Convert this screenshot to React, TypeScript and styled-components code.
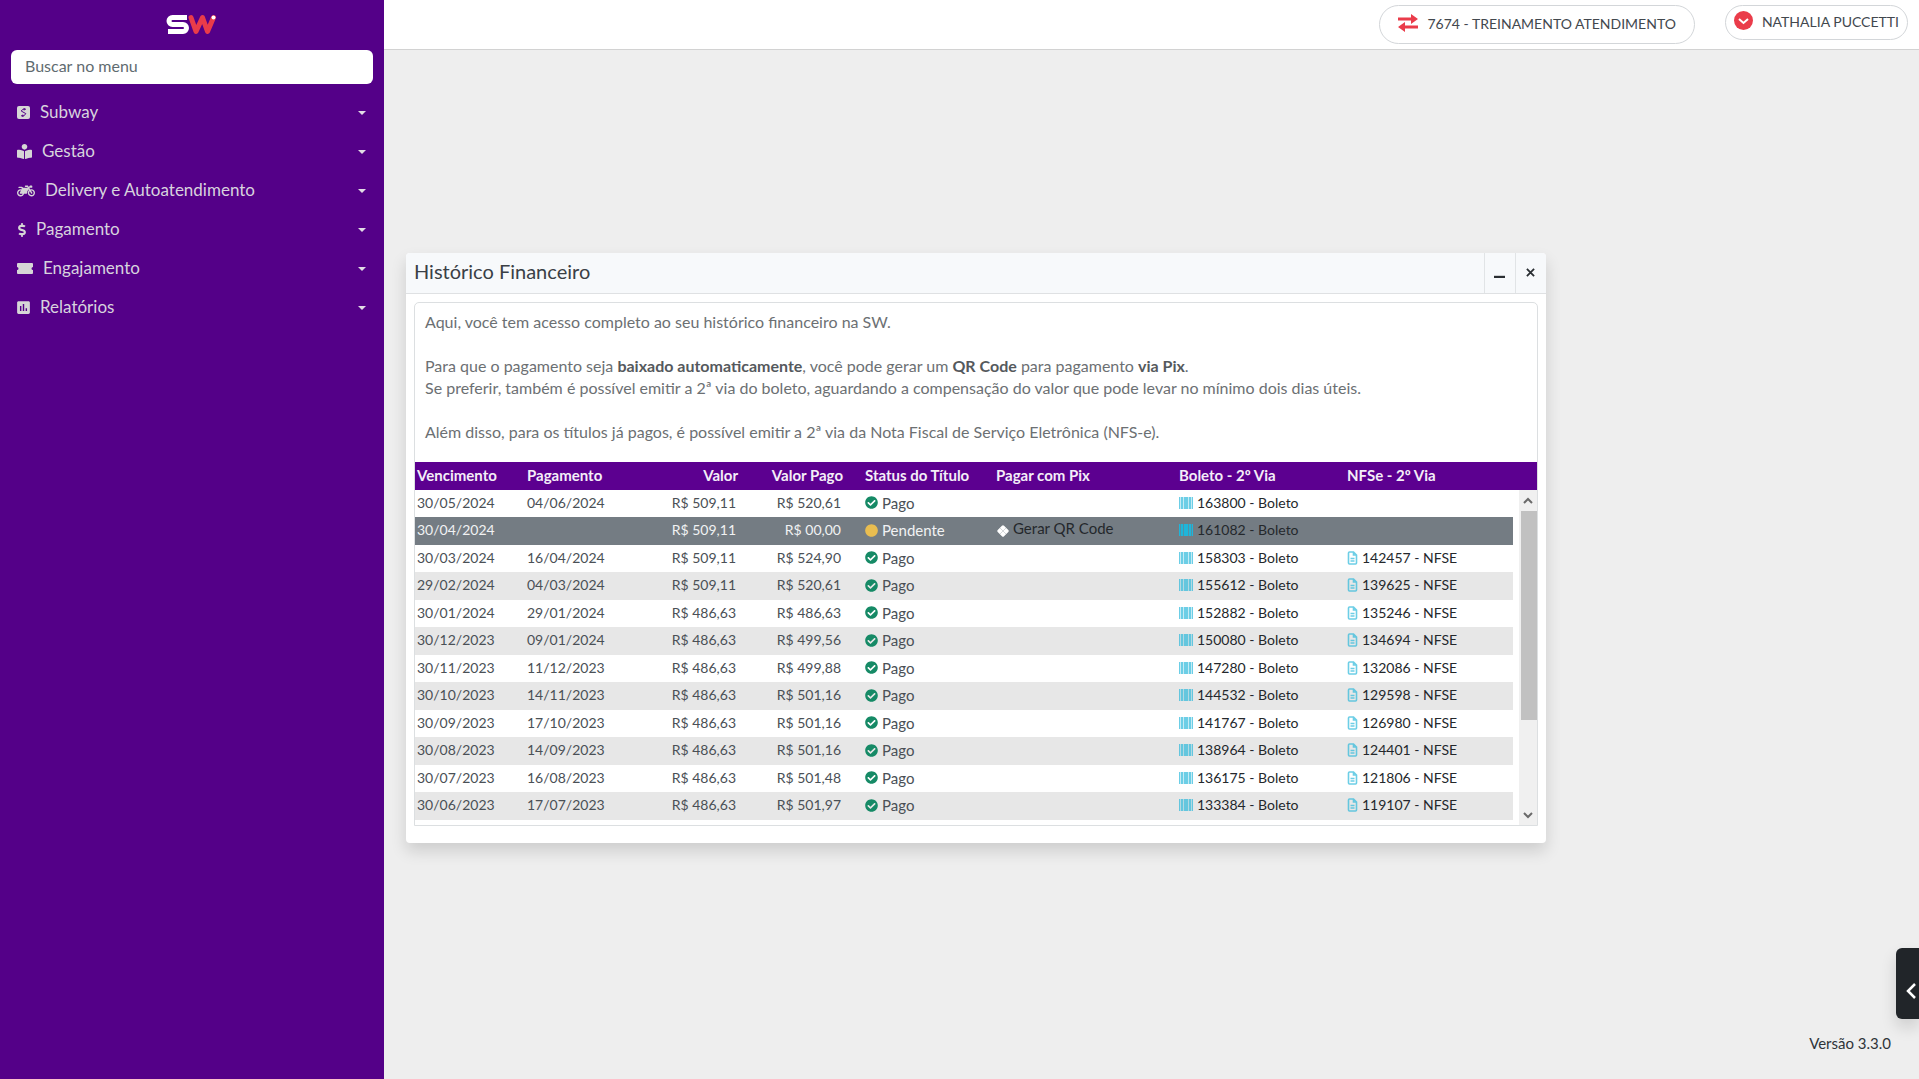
import React from "react";
import styled, { createGlobalStyle, css } from "styled-components";
import { FaMotorcycle, FaDollarSign, FaBookReader, FaCheckCircle, FaCircle } from "react-icons/fa";
import { MdInsertChart } from "react-icons/md";

const GlobalStyle = createGlobalStyle`
  *, *::before, *::after { box-sizing: border-box; }
  body { margin: 0; background: #eeeeee; color: #4a5056; font-family: Lato, "Open Sans", sans-serif; font-size: 16px; }
  button, input { font: inherit; color: inherit; }
  p { margin: 0; }
`;

const Page = styled.div`
  display: grid;
  grid-template-columns: 384px minmax(0, 1fr);
  min-height: 100vh;
`;

const Sidebar = styled.aside`
  display: flex;
  flex-direction: column;
  background: #540088;
  padding: 14px 11px 0;
`;

const Logo = styled.svg`
  display: block;
  align-self: center;
  width: 52px;
  height: 22px;
`;

const SearchInput = styled.input`
  width: 100%;
  height: 34px;
  margin-top: 14px;
  padding: 0 14px 4px;
  border: 0;
  border-radius: 6px;
  background: #fff;
  &::placeholder { color: #5f6b70; opacity: 1; }
`;

const Menu = styled.ul`
  list-style: none;
  margin: 8px 0 0;
  padding: 0;
`;

const MenuButton = styled.button`
  display: flex;
  align-items: center;
  gap: 10px;
  width: 100%;
  height: 39px;
  padding: 0 7px 0 6px;
  border: 0;
  background: none;
  color: #d8d3de;
  font-size: 17px;
  line-height: 22px;
  text-align: left;
  cursor: pointer;
`;

const MenuIcon = styled.span<{ $width: number }>`
  display: flex;
  align-items: center;
  justify-content: center;
  width: ${(p) => p.$width}px;
  padding-top: 2px;
  color: #d6d6d6;
  svg { flex: none; }
`;

const MenuLabel = styled.span`
  flex: 1;
`;

const Caret = styled.span`
  margin-top: 3px;
  border: 4px solid transparent;
  border-top-color: #e2dde6;
  border-bottom: 0;
`;

const Content = styled.div`
  display: flex;
  flex-direction: column;
  min-width: 0;
`;

const TopBar = styled.header`
  display: flex;
  justify-content: flex-end;
  align-items: flex-start;
  gap: 30px;
  height: 50px;
  padding: 5px 11px 0;
  background: #fff;
  border-bottom: 1px solid #d2d2d2;
`;

const Pill = styled.button<{ $tall?: boolean }>`
  display: flex;
  align-items: center;
  gap: 9px;
  height: ${(p) => (p.$tall ? 39 : 35)}px;
  padding: ${(p) => (p.$tall ? "0 18px 2px" : "0 8px 2px")};
  border: 1px solid #d3d6d9;
  border-radius: 20px;
  background: #fff;
  color: #42484e;
  font-size: 14px;
  line-height: 20px;
  cursor: pointer;
  svg { flex: none; margin-bottom: 2px; }
`;

const Desktop = styled.main`
  flex: 1;
  padding: 203px 0 40px 22px;
`;

const Window = styled.section`
  width: calc(100% - 373px);
  min-width: 1000px;
  background: #fff;
  border-radius: 4px;
  box-shadow: 0 8px 16px rgba(0, 0, 0, 0.14);
`;

const TitleBar = styled.div`
  display: flex;
  align-items: stretch;
  height: 41px;
  background: #f7f9fb;
  border-bottom: 1px solid #dfe1e3;
  border-radius: 4px 4px 0 0;
`;

const Title = styled.h1`
  flex: 1;
  margin: 0;
  padding-left: 8px;
  color: #3a4046;
  font-size: 20px;
  font-weight: 400;
  line-height: 36px;
`;

const WindowButton = styled.button`
  display: flex;
  align-items: center;
  justify-content: center;
  width: 31px;
  padding: 0 2px 2px 0;
  border: 0;
  border-left: 1px solid #e1e4e6;
  background: none;
  color: #2a2e32;
  cursor: pointer;
`;

const WindowBody = styled.div`
  padding: 8px 8px 17px;
`;

const Frame = styled.div`
  border: 1px solid #dcdfe1;
  border-radius: 5px 5px 0 0;
`;

const Intro = styled.div`
  padding: 8px 10px 19px;
  color: #6c7073;
  line-height: 22px;
  p + p { margin-top: 22px; }
  strong { color: #55595d; font-weight: 700; }
`;

const TableArea = styled.div`
  display: grid;
  grid-template-columns: minmax(0, 1fr) 18px;
  grid-template-rows: 28px auto;
`;

const Table = styled.table`
  display: block;
  grid-area: 1 / 1 / 3 / 3;
  margin-bottom: 5px;
  font-size: 14px;
  line-height: 20px;
`;

const Head = styled.thead`
  display: block;
  padding-right: 24px;
  background: #5c0090;
  color: #f4eef8;
`;

const Body = styled.tbody`
  display: block;
  margin-right: 24px;
`;

const rowGrid = css`
  display: grid;
  grid-template-columns: 92fr 92fr 105fr 87fr 113fr 165fr 150fr 168fr;
  column-gap: 18px;
  align-items: center;
`;

const HeadRow = styled.tr`
  ${rowGrid}
  height: 28px;
`;

const Row = styled.tr<{ $selected: boolean }>`
  ${rowGrid}
  height: 27px;
  &:nth-child(even) { height: 28px; background: #e7e7e7; }
  ${(p) => p.$selected && css`
    &&:nth-child(even) { background: #747c83; color: #f1f2f3; }
  `}
`;

const HeadCell = styled.th<{ $right?: boolean }>`
  padding: 0 2px 2px;
  font-size: 15px;
  font-weight: 700;
  text-align: ${(p) => (p.$right ? "right" : "left")};
  white-space: nowrap;
`;

const Cell = styled.td<{ $right?: boolean }>`
  padding: 0 ${(p) => (p.$right ? 4 : 2)}px 2px 2px;
  text-align: ${(p) => (p.$right ? "right" : "left")};
  white-space: nowrap;
`;

const Status = styled.span<{ $paid: boolean }>`
  display: flex;
  align-items: center;
  gap: 4px;
  font-size: 15px;
  svg { color: ${(p) => (p.$paid ? "#168a66" : "#e9bd50")}; }
`;

const DocLink = styled.a<{ $strong?: boolean }>`
  display: flex;
  align-items: center;
  gap: 4px;
  color: #24282c;
  text-decoration: none;
  svg { opacity: ${(p) => (p.$strong ? 1 : 0.65)}; }
`;

const PixLink = styled.a`
  display: flex;
  align-items: center;
  gap: 3px;
  color: #24282c;
  font-size: 15px;
  text-decoration: none;
  span { padding-bottom: 4px; }
  svg { margin-top: 2px; }
`;

const ScrollTrack = styled.div`
  grid-area: 2 / 2;
  display: flex;
  flex-direction: column;
  background: #f0f0f0;
`;

const ScrollButton = styled.button`
  display: flex;
  align-items: center;
  justify-content: center;
  height: 21px;
  padding: 0;
  border: 0;
  background: none;
  color: #6a6a6a;
`;

const ScrollThumb = styled.div`
  flex: 208;
  margin-left: 2px;
  background: #c1c1c1;
`;

const ScrollRest = styled.div`
  flex: 84;
`;

const SideTab = styled.button`
  position: fixed;
  right: 0;
  bottom: 60px;
  display: flex;
  align-items: center;
  justify-content: flex-end;
  width: 23px;
  height: 71px;
  padding: 14px 3px 0 0;
  border: 0;
  border-radius: 6px 0 0 6px;
  background: #212529;
  box-shadow: 0 8px 16px rgba(0, 0, 0, 0.14);
  color: #fff;
`;

const Version = styled.footer`
  padding: 0 28px 25px;
  color: #2f3439;
  font-size: 15px;
  line-height: 22px;
  text-align: right;
`;

const SubwayIcon = () => (
  <svg width="13" height="13" viewBox="0 0 13 13">
    <rect width="13" height="13" rx="2" fill="currentColor" />
    <path d="M9 3.2H6L4.2 5l4.6 2.6L7 9.800H4M7.2 2v2.4M5.8 8.6V11" fill="none" stroke="#540088" strokeWidth="1" />
  </svg>
);

const TicketIcon = () => (
  <svg width="16" height="11" viewBox="0 0 16 11">
    <path d="M1 0h14a1 1 0 0 1 1 1v3a1.5 1.5 0 0 0 0 3v3a1 1 0 0 1-1 1H1a1 1 0 0 1-1-1V7a1.5 1.5 0 0 0 0-3V1a1 1 0 0 1 1-1z" fill="currentColor" />
  </svg>
);

const BarcodeIcon = () => (
  <svg width="14" height="12" viewBox="0 0 14 12" fill="#1fb5da">
    <rect width="14" height="12" opacity="0.4" />
    <rect x="0" width="1" height="12" />
    <rect x="2" width="2" height="12" />
    <rect x="5" width="4" height="12" />
    <rect x="10" width="2" height="12" />
    <rect x="13" width="1" height="12" />
  </svg>
);

const FileIcon = () => (
  <svg width="11" height="14" viewBox="0 0 10 14" fill="none" stroke="#1fb5da" strokeWidth="1.6">
    <path d="M1 2a1 1 0 0 1 1-1h4l3 3v8a1 1 0 0 1-1 1H2a1 1 0 0 1-1-1zM6 1v3h3M3 7.5h4M3 10h4" />
  </svg>
);

const PixIcon = () => (
  <svg width="14" height="14" viewBox="0 0 14 14">
    <rect x="2.5" y="2.5" width="9" height="9" rx="1.5" transform="rotate(45 7 7)" fill="#fff" />
    <path d="M4 4l6 6M10 4l-6 6" stroke="#d5d8da" strokeWidth="1" />
  </svg>
);

const Chevron = ({ d, size = 9, weight = 2 }: { d: string; size?: number; weight?: number }) => (
  <svg width={size} height={size} viewBox="0 0 10 10" fill="none" stroke="currentColor" strokeWidth={weight}>
    <path d={d} />
  </svg>
);

const menu = [
  { label: "Subway", width: 13, icon: <SubwayIcon /> },
  { label: "Gestão", width: 15, icon: <FaBookReader size={15} /> },
  { label: "Delivery e Autoatendimento", width: 18, icon: <FaMotorcycle size={18} /> },
  { label: "Pagamento", width: 9, icon: <FaDollarSign size={14} /> },
  { label: "Engajamento", width: 16, icon: <TicketIcon /> },
  { label: "Relatórios", width: 13, icon: <MdInsertChart size={17} /> },
];

type Title = { due: string; paidOn?: string; value: string; paid: string; boleto: string; nfse?: string };

const titles: Title[] = [
  { due: "30/05/2024", paidOn: "04/06/2024", value: "509,11", paid: "520,61", boleto: "163800" },
  { due: "30/04/2024", value: "509,11", paid: "00,00", boleto: "161082" },
  { due: "30/03/2024", paidOn: "16/04/2024", value: "509,11", paid: "524,90", boleto: "158303", nfse: "142457" },
  { due: "29/02/2024", paidOn: "04/03/2024", value: "509,11", paid: "520,61", boleto: "155612", nfse: "139625" },
  { due: "30/01/2024", paidOn: "29/01/2024", value: "486,63", paid: "486,63", boleto: "152882", nfse: "135246" },
  { due: "30/12/2023", paidOn: "09/01/2024", value: "486,63", paid: "499,56", boleto: "150080", nfse: "134694" },
  { due: "30/11/2023", paidOn: "11/12/2023", value: "486,63", paid: "499,88", boleto: "147280", nfse: "132086" },
  { due: "30/10/2023", paidOn: "14/11/2023", value: "486,63", paid: "501,16", boleto: "144532", nfse: "129598" },
  { due: "30/09/2023", paidOn: "17/10/2023", value: "486,63", paid: "501,16", boleto: "141767", nfse: "126980" },
  { due: "30/08/2023", paidOn: "14/09/2023", value: "486,63", paid: "501,16", boleto: "138964", nfse: "124401" },
  { due: "30/07/2023", paidOn: "16/08/2023", value: "486,63", paid: "501,48", boleto: "136175", nfse: "121806" },
  { due: "30/06/2023", paidOn: "17/07/2023", value: "486,63", paid: "501,97", boleto: "133384", nfse: "119107" },
];

export default function App() {
  return (
    <Page>
      <GlobalStyle />
      <Sidebar>
        <Logo viewBox="0 0 52 22" role="img" aria-label="SW">
          <path d="M21 3.5H6.5a3.5 3.5 0 0 0 0 7H17a3.5 3.5 0 0 1 0 7H2" fill="none" stroke="#fff" strokeWidth="5" />
          <path d="M25 3.5l5 14 6.5-14 5 14 6-14" fill="none" stroke="#ea3c4a" strokeWidth="5" strokeLinejoin="round" strokeLinecap="round" />
          <circle cx="47.5" cy="3.5" r="2" fill="#fff" />
        </Logo>
        <SearchInput type="search" placeholder="Buscar no menu" aria-label="Buscar no menu" />
        <nav>
          <Menu>
            {menu.map((item) => (
              <li key={item.label}>
                <MenuButton type="button">
                  <MenuIcon $width={item.width}>{item.icon}</MenuIcon>
                  <MenuLabel>{item.label}</MenuLabel>
                  <Caret />
                </MenuButton>
              </li>
            ))}
          </Menu>
        </nav>
      </Sidebar>
      <Content>
        <TopBar>
          <Pill type="button" $tall>
            <svg width="20" height="18" viewBox="0 0 20 18" fill="#ea3c4a">
              <path d="M0 3.5h13V0L20 5l-7 5V6.5H0zM20 11.5H7V8L0 13l7 5v-3.5h13z" />
            </svg>
            7674 - TREINAMENTO ATENDIMENTO
          </Pill>
          <Pill type="button">
            <svg width="19" height="19" viewBox="0 0 19 19">
              <circle cx="9.5" cy="9.5" r="9.5" fill="#ea3c4a" />
              <path d="M5 8l4.5 4L14 8" fill="none" stroke="#fff" strokeWidth="2" />
            </svg>
            NATHALIA PUCCETTI
          </Pill>
        </TopBar>
        <Desktop>
          <Window>
            <TitleBar>
              <Title>Histórico Financeiro</Title>
              <WindowButton type="button" aria-label="Minimizar">
                <Chevron d="M0 9h10" size={11} weight={2} />
              </WindowButton>
              <WindowButton type="button" aria-label="Fechar">
                <Chevron d="M1 1l8 8M9 1l-8 8" />
              </WindowButton>
            </TitleBar>
            <WindowBody>
              <Frame>
                <Intro>
                  <p>Aqui, você tem acesso completo ao seu histórico financeiro na SW.</p>
                  <p>
                    Para que o pagamento seja <strong>baixado automaticamente</strong>, você pode gerar um{" "}
                    <strong>QR Code</strong> para pagamento <strong>via Pix</strong>.<br />
                    Se preferir, também é possível emitir a 2ª via do boleto, aguardando a compensação do valor que pode
                    levar no mínimo dois dias úteis.
                  </p>
                  <p>Além disso, para os títulos já pagos, é possível emitir a 2ª via da Nota Fiscal de Serviço Eletrônica (NFS-e).</p>
                </Intro>
                <TableArea>
                  <Table>
                    <Head>
                      <HeadRow>
                        <HeadCell>Vencimento</HeadCell>
                        <HeadCell>Pagamento</HeadCell>
                        <HeadCell $right>Valor</HeadCell>
                        <HeadCell $right>Valor Pago</HeadCell>
                        <HeadCell>Status do Título</HeadCell>
                        <HeadCell>Pagar com Pix</HeadCell>
                        <HeadCell>Boleto - 2º Via</HeadCell>
                        <HeadCell>NFSe - 2º Via</HeadCell>
                      </HeadRow>
                    </Head>
                    <Body>
                      {titles.map((t) => (
                        <Row key={t.due} $selected={!t.paidOn}>
                          <Cell>{t.due}</Cell>
                          <Cell>{t.paidOn}</Cell>
                          <Cell $right>R$ {t.value}</Cell>
                          <Cell $right>R$ {t.paid}</Cell>
                          <Cell>
                            <Status $paid={!!t.paidOn}>
                              {t.paidOn ? <FaCheckCircle size={13} /> : <FaCircle size={13} />}
                              {t.paidOn ? "Pago" : "Pendente"}
                            </Status>
                          </Cell>
                          <Cell>
                            {!t.paidOn && (
                              <PixLink href="#pix">
                                <PixIcon />
                                <span>Gerar QR Code</span>
                              </PixLink>
                            )}
                          </Cell>
                          <Cell>
                            <DocLink href="#boleto" $strong={!t.paidOn}>
                              <BarcodeIcon />
                              {t.boleto} - Boleto
                            </DocLink>
                          </Cell>
                          <Cell>
                            {t.nfse && (
                              <DocLink href="#nfse">
                                <FileIcon />
                                {t.nfse} - NFSE
                              </DocLink>
                            )}
                          </Cell>
                        </Row>
                      ))}
                    </Body>
                  </Table>
                  <ScrollTrack>
                    <ScrollButton type="button" aria-label="Rolar para cima">
                      <Chevron d="M1 7l4-4 4 4" size={10} />
                    </ScrollButton>
                    <ScrollThumb />
                    <ScrollRest />
                    <ScrollButton type="button" aria-label="Rolar para baixo">
                      <Chevron d="M1 3l4 4 4-4" size={10} />
                    </ScrollButton>
                  </ScrollTrack>
                </TableArea>
              </Frame>
            </WindowBody>
          </Window>
        </Desktop>
        <Version>Versão 3.3.0</Version>
      </Content>
      <SideTab type="button" aria-label="Abrir painel">
        <svg width="10" height="16" viewBox="0 0 10 16" fill="none" stroke="currentColor" strokeWidth="2.5">
          <path d="M9 1L2 8l7 7" />
        </svg>
      </SideTab>
    </Page>
  );
}
